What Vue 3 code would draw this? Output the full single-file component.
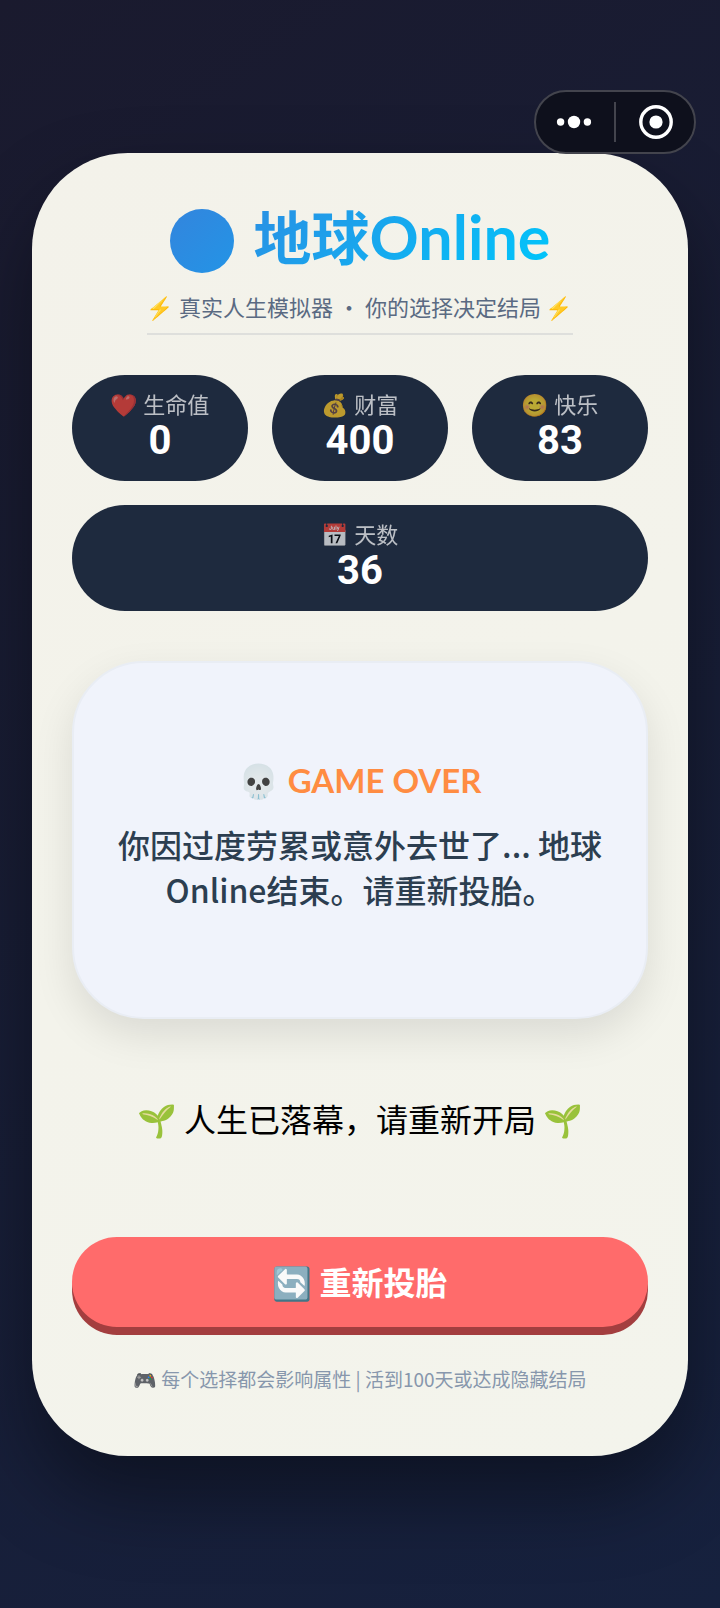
<template>
  <div class="page">
    <div class="capsule">
      <button type="button" class="capsule-btn" aria-label="更多" @click="menuOpen = !menuOpen">
        <svg width="36" height="36" viewBox="0 0 36 36" fill="#fff">
          <circle cx="4.6" cy="18" r="3.7" />
          <circle cx="18" cy="18" r="6.2" />
          <circle cx="31.4" cy="18" r="3.7" />
        </svg>
      </button>
      <span class="capsule-line"></span>
      <button type="button" class="capsule-btn" aria-label="关闭">
        <svg width="36" height="36" viewBox="0 0 36 36">
          <circle cx="18" cy="18" r="15.2" fill="none" stroke="#fff" stroke-width="3.4" />
          <circle cx="18" cy="18" r="6.6" fill="#fff" />
        </svg>
      </button>
    </div>

    <main class="card">
      <header class="header">
        <h1 class="title">
          <span class="globe"></span>
          <span class="title-text">地球<span class="latin">Online</span></span>
        </h1>
        <p class="subtitle"><span class="emoji">⚡</span> 真实人生模拟器 · 你的选择决定结局 <span class="emoji">⚡</span></p>
      </header>

      <section class="stats">
        <div v-for="s in stats" :key="s.label" class="stat">
          <div class="stat-label"><span class="emoji">{{ s.icon }}</span> {{ s.label }}</div>
          <div class="stat-value">{{ s.value }}</div>
        </div>
      </section>

      <section class="event">
        <h2 class="event-title"><span class="emoji">💀</span> GAME OVER</h2>
        <p class="event-text">你因过度劳累或意外去世了... 地球Online结束。请重新投胎。</p>
      </section>

      <p class="ended"><span class="emoji">🌱</span> 人生已落幕，请重新开局 <span class="emoji">🌱</span></p>

      <button type="button" class="restart"><span class="emoji">🔄</span> 重新投胎</button>

      <footer class="hint"><span class="emoji">🎮</span> 每个选择都会影响属性 | 活到100天或达成隐藏结局</footer>
    </main>
  </div>
</template>

<script setup>
import { ref } from 'vue'

const menuOpen = ref(false)

const stats = ref([
  { icon: '❤️', label: '生命值', value: 0 },
  { icon: '💰', label: '财富', value: 400 },
  { icon: '😊', label: '快乐', value: 83 },
  { icon: '📅', label: '天数', value: 36 },
])
</script>

<style>
body {
  margin: 0;
  background: #16213e;
}
</style>

<style scoped>
.page {
  position: relative;
  box-sizing: border-box;
  min-height: 100vh;
  padding: 32px;
  display: flex;
  align-items: center;
  justify-content: center;
  background: linear-gradient(145deg, #1a1a2e 0%, #16213e 100%);
  font-family: "Noto Sans CJK SC", "Noto Sans", sans-serif;
}
h1, h2, p { margin: 0; }
.emoji {
  font-family: "Noto Color Emoji", "Noto Sans CJK SC", sans-serif;
  line-height: 1;
}

.capsule {
  position: absolute;
  top: 90px;
  right: 24px;
  z-index: 2;
  box-sizing: border-box;
  width: 162px;
  height: 64px;
  display: flex;
  align-items: center;
  gap: 2px;
  border: 2px solid #43444d;
  border-radius: 32px;
  background: #0e101c;
}
.capsule-btn {
  flex: 1;
  height: 100%;
  padding: 0;
  display: flex;
  align-items: center;
  justify-content: center;
  border: 0;
  background: none;
  cursor: pointer;
}
.capsule-line {
  width: 2px;
  height: 40px;
  background: #43444d;
}

.card {
  box-sizing: border-box;
  width: 100%;
  padding: 44px 40px 63px;
  border-radius: 96px;
  background: linear-gradient(145deg, #f3f2ea 0%, #f3f4ec 100%);
  box-shadow: 0 40px 80px rgba(0, 0, 0, 0.4);
  text-align: center;
}

.header {
  display: flex;
  flex-direction: column;
  align-items: center;
}
.title {
  display: flex;
  align-items: flex-end;
  gap: 20px;
  font-size: 58px;
  line-height: 76px;
  font-weight: 700;
}
.globe {
  width: 64px;
  height: 64px;
  border-radius: 50%;
  background: linear-gradient(135deg, #3385dd, #2394e6);
}
.title-text {
  background: linear-gradient(135deg, #2a8fe3, #00c6fb);
  -webkit-background-clip: text;
  background-clip: text;
  color: transparent;
}
.latin {
  font-family: Lato, sans-serif;
  font-size: 61px;
  line-height: 1;
}
.subtitle {
  margin-top: 17px;
  padding-bottom: 11px;
  border-bottom: 2px solid #dedfdc;
  font-size: 22px;
  line-height: 32px;
  color: #5a6a82;
}

.stats {
  margin-top: 40px;
  display: grid;
  grid-template-columns: repeat(3, 1fr);
  gap: 24px;
}
.stat {
  padding: 14px 8px 18px;
  border-radius: 54px;
  background: #1e2a3e;
  color: #fff;
}
.stat:last-child { grid-column: 1 / -1; }
.stat-label {
  margin-bottom: 2px;
  font-size: 22px;
  line-height: 28px;
  opacity: 0.7;
}
.stat-value {
  font-family: Roboto, sans-serif;
  font-size: 40px;
  line-height: 44px;
  font-weight: 700;
}

.event {
  box-sizing: border-box;
  min-height: 358px;
  margin-top: 50px;
  padding: 32px 40px 44px;
  display: flex;
  flex-direction: column;
  justify-content: center;
  gap: 18px;
  border: 2px solid #e9edf4;
  border-radius: 72px;
  background: #f0f3fb;
  box-shadow: 0 16px 40px rgba(0, 0, 0, 0.1);
}
.event-title {
  font-family: Lato, "Noto Sans CJK SC", sans-serif;
  font-size: 33px;
  line-height: 48px;
  font-weight: 700;
  color: #ff8c42;
}
.event-text {
  font-size: 32px;
  line-height: 45px;
  font-weight: 500;
  color: #2c3e50;
}

.ended {
  margin-top: 77px;
  font-size: 32px;
  line-height: 44px;
  color: #000;
}

.restart {
  display: block;
  width: 100%;
  margin-top: 97px;
  padding: 21px 22px 23px;
  border: 0;
  border-radius: 48px;
  background: #ff6b6b;
  box-shadow: 0 8px 0 #a33e3f;
  color: #fff;
  font-family: inherit;
  font-size: 32px;
  line-height: 46px;
  font-weight: 700;
  cursor: pointer;
}

.hint {
  margin-top: 38px;
  font-size: 19px;
  line-height: 28px;
  color: #8797ac;
}
</style>
